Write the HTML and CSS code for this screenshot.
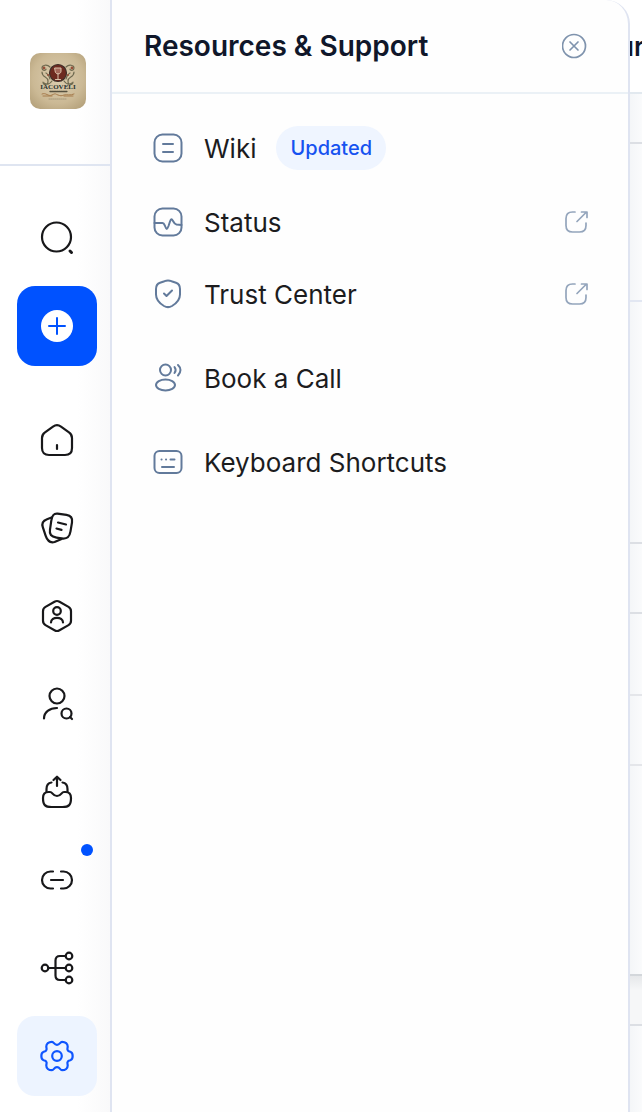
FILE: index.html
```html
<!DOCTYPE html>
<html lang="en">

<head>
    <meta charset="UTF-8">
    <meta name="viewport" content="width=device-width, initial-scale=1.0">
    <title>Resources &amp; Support</title>
    <link rel="stylesheet" href="styles.css">
</head>

<body>
    <div class="app">
        <aside class="sidebar">
            <div class="brand">
                <a href="#" class="brand-link" aria-label="Iacoveli">
                    <svg class="brand-logo" viewBox="0 0 56 56">
                        <defs>
                            <radialGradient id="paper" cx="50%" cy="45%" r="75%">
                                <stop offset="0" stop-color="#dccdb0" />
                                <stop offset="0.6" stop-color="#cbb995" />
                                <stop offset="1" stop-color="#ad9972" />
                            </radialGradient>
                        </defs>
                        <rect width="56" height="56" fill="url(#paper)" />
                        <g fill="none" stroke="#6f6a50" stroke-width="1.2">
                            <path d="M20 14c-3-3-8-2-8 1s4 3 4 1M12 19c0 6 6 4 6 9s-5 4-5 1M16 20c2 1 3 3 4 6M14 30c3 2 6 1 8-2" />
                            <path d="M36 14c3-3 8-2 8 1s-4 3-4 1M44 19c0 6-6 4-6 9s5 4 5 1M40 20c-2 1-3 3-4 6M42 30c-3 2-6 1-8-2" />
                        </g>
                        <g fill="#98503a">
                            <circle cx="14" cy="15" r="1.4" />
                            <circle cx="42" cy="15" r="1.4" />
                            <circle cx="18" cy="22" r="1" />
                            <circle cx="38" cy="22" r="1" />
                        </g>
                        <circle cx="28" cy="20" r="8.5" fill="#6d2a20" stroke="#3e302a" stroke-width="1.2" />
                        <path d="M25 15h6v3c0 4-6 4-6 0zM28 21v5M25.500 26.500h5" fill="#a4685a" stroke="#dcc4ac" stroke-width="1" />
                        <text x="28" y="36" class="brand-name">IACOVELI</text>
                        <path d="M20 38.500h17" stroke="#55503f" stroke-width="1.400" stroke-dasharray="1.500 0.700" />
                        <path d="M12 41c4-2 6 3 10 1s3-1 6 0 3 1 6 0 6 1 10-1M13 43h9M34 43h9" fill="none" stroke="#a67c4d" stroke-width="1" />
                        <path d="M19 46h18" stroke="#9d9175" stroke-width="0.800" stroke-dasharray="1 1" />
                    </svg>
                </a>
            </div>

            <nav class="nav" aria-label="Main">
                <button type="button" class="nav-btn" aria-label="Search">
                    <svg class="nav-icon" viewBox="0 0 36 36">
                        <circle cx="17.500" cy="17" r="14.500" />
                        <path d="M31 31l1.500 1.500" stroke-width="3" />
                    </svg>
                </button>
                <button type="button" class="nav-btn nav-btn-add" aria-label="Create">
                    <svg class="nav-icon" viewBox="0 0 36 36">
                        <circle cx="18" cy="18" r="16" fill="#fff" stroke="none" />
                        <path d="M18 10v16M10 18h16" stroke-width="2" />
                    </svg>
                </button>

                <a href="#" class="nav-btn nav-btn-first" aria-label="Home">
                    <svg class="nav-icon" viewBox="0 0 36 36">
                        <path d="M3 16c0-2.800 1-4.300 3-5.700l8-5.700c3-2.100 5-2.100 8 0l8 5.700c2 1.400 3 2.900 3 5.700v10c0 4.500-2.500 7-7 7H10c-4.500 0-7-2.500-7-7z" />
                        <path d="M18 23v4" />
                    </svg>
                </a>
                <a href="#" class="nav-btn" aria-label="Content">
                    <svg class="nav-icon" viewBox="0 0 36 36">
                        <path d="M18.500 3.600l9 1.300c4.400.7 6.200 3.100 5.500 7.500l-1.500 9c-1 6-3.500 7.800-9 7l-5-.8c-5.500-.9-7.300-3.200-6.500-8l1.300-9c.8-5.400 2.200-7.400 6.200-7z" />
                        <path d="M12.500 7.500L8 9.200c-4 1.500-5.500 4-4.200 8l2.800 8.500c1.800 5.500 4.400 7.500 9 6.300l7-3" />
                        <path d="M19 12.500l8 2M17.500 18.500l5 1.400" />
                    </svg>
                </a>
                <a href="#" class="nav-btn" aria-label="Profile">
                    <svg class="nav-icon" viewBox="0 0 36 36">
                        <path d="M15.500 3.700c1.800-1 3.200-1 5 0l9 5.200c1.800 1 2.500 2.200 2.500 4.300v9.600c0 2.100-.7 3.300-2.500 4.300l-9 5.200c-1.800 1-3.200 1-5 0l-9-5.200C4.700 26.100 4 24.900 4 22.800v-9.600c0-2.100.7-3.300 2.500-4.300z" />
                        <circle cx="18" cy="13" r="3.800" />
                        <path d="M12 24.500c0-6.300 12-6.300 12 0" />
                    </svg>
                </a>
                <a href="#" class="nav-btn" aria-label="Find people">
                    <svg class="nav-icon" viewBox="0 0 36 36">
                        <circle cx="18" cy="10" r="7.500" />
                        <path d="M5 32.500C5 26 10.500 22 18 22" />
                        <circle cx="27.500" cy="27.500" r="5" />
                        <path d="M31 31l2 2" />
                    </svg>
                </a>
                <a href="#" class="nav-btn" aria-label="Outbox">
                    <svg class="nav-icon" viewBox="0 0 36 36">
                        <path d="M11 18c2.800 0 2.500 4 7 4s4.200-4 7-4h1.500c4 0 5.500 2 5.500 6 0 7-2 9-8.500 9h-11C6 33 4 31 4 24c0-4 1.500-6 5.500-6z" />
                        <path d="M7.500 17.500V15c0-4 1.500-6 5-6.500M28.500 17.500V15c0-4-1.500-6-5-6.500M18 12V3M14.500 6L18 2.700 21.500 6" />
                    </svg>
                </a>
                <a href="#" class="nav-btn" aria-label="Links, new">
                    <svg class="nav-icon" viewBox="0 0 36 36">
                        <path d="M14 9.500h-2.500a8.500 8.500 0 0 0 0 17H14M22 9.500h2.500a8.500 8.500 0 0 1 0 17H22M12 18h12" />
                    </svg>
                    <span class="nav-dot"></span>
                </a>
                <a href="#" class="nav-btn" aria-label="Flows">
                    <svg class="nav-icon" viewBox="0 0 36 36">
                        <circle cx="6" cy="18" r="3.300" />
                        <circle cx="30" cy="6" r="3.300" />
                        <circle cx="30" cy="18" r="3.300" />
                        <circle cx="30" cy="30" r="3.300" />
                        <path d="M9.500 18h17M26.500 6H21c-3 0-4.500 1.500-4.500 4.500v15c0 3 1.500 4.500 4.500 4.500h5.500" />
                    </svg>
                </a>
                <a href="#" class="nav-btn nav-btn-active" aria-label="Settings">
                    <svg class="nav-icon" viewBox="0 0 36 36">
                        <circle cx="18" cy="18" r="4.800" />
                        <path d="M13 3.800c2 0 2 3 5 3s3-3 5-3c3.500 0 5.700 2 5.700 4.800 0 2-.9 2.400.1 3.700.9 1.300 1.600.9 2.900 1.600 2.600 1.200 2.600 7 0 8.200-1.300.7-2 .3-2.900 1.600-1 1.300-.1 1.700-.1 3.700 0 2.800-2.200 4.800-5.700 4.800-2 0-2-3-5-3s-3 3-5 3c-3.500 0-5.700-2-5.700-4.800 0-2 .9-2.400-.1-3.700-.9-1.300-1.600-.9-2.900-1.600-2.600-1.200-2.600-7 0-8.200 1.300-.7 2-.3 2.900-1.600 1-1.300.1-1.700.1-3.700 0-2.800 2.200-4.800 5.700-4.800z" />
                    </svg>
                </a>
            </nav>
        </aside>

        <section class="panel">
            <header class="panel-header">
                <h2 class="panel-title">Resources &amp; Support</h2>
                <button type="button" class="close" aria-label="Close">
                    <svg class="small-icon" viewBox="0 0 26 26">
                        <circle cx="12" cy="13" r="11.500" />
                        <path d="M8 9l8 8M16 9l-8 8" />
                    </svg>
                </button>
            </header>

            <ul class="menu">
                <li class="menu-first">
                    <a href="#" class="menu-item">
                        <svg class="menu-icon" viewBox="0 0 32 32">
                            <rect x="2.500" y="2.500" width="27" height="27" rx="8" />
                            <path d="M11 12h10M11 20h10" />
                        </svg>
                        <span>Wiki</span>
                        <span class="badge">Updated</span>
                    </a>
                </li>
                <li>
                    <a href="#" class="menu-item">
                        <svg class="menu-icon" viewBox="0 0 32 32">
                            <rect x="2.500" y="2.500" width="27" height="27" rx="8" />
                            <path d="M2.500 17h8c1.500 0 1.700 1 2.500 3 1.500 4 2 4 3.500 0l1.500-4.500c1-3 1.700-3 3-.5 1 2 1.500 3 3.500 3.500l5 .5" />
                        </svg>
                        <span>Status</span>
                        <svg class="small-icon external" viewBox="0 0 26 26">
                            <path d="M12 3H9.500C5 3 3 5 3 9.500v7c0 4.500 2 6.500 6.500 6.500h7c4.500 0 6.500-2 6.500-6.500V14M14 12.500L23 3.500M18.500 3H24v5.500" />
                        </svg>
                    </a>
                </li>
                <li>
                    <a href="#" class="menu-item">
                        <svg class="menu-icon" viewBox="0 0 32 32">
                            <path d="M12.500 3.200c2.700-1.200 4.300-1.200 7 0l4.500 1.500c3 1 4 2.500 4 6.300v5.500c0 5.500-3 8.500-8 11.500-3.200 1.800-4.800 1.800-8 0-5-3-8-6-8-11.500V11c0-3.800 1-5.300 4-6.300z" />
                            <path d="M12 15.500l2.500 2.500 5.500-5.500" />
                        </svg>
                        <span>Trust Center</span>
                        <svg class="small-icon external" viewBox="0 0 26 26">
                            <path d="M12 3H9.500C5 3 3 5 3 9.500v7c0 4.500 2 6.500 6.500 6.500h7c4.500 0 6.500-2 6.500-6.500V14M14 12.500L23 3.500M18.500 3H24v5.500" />
                        </svg>
                    </a>
                </li>
                <li class="menu-group">
                    <a href="#" class="menu-item">
                        <svg class="menu-icon" viewBox="0 0 32 32">
                            <circle cx="13.500" cy="8" r="5.500" />
                            <ellipse cx="13.500" cy="23" rx="9.500" ry="5.500" />
                            <path d="M22.500 5c1.500 2 1.500 4 0 6M26 3c3.300 3 3.300 7 0 10.500" />
                        </svg>
                        <span>Book a Call</span>
                    </a>
                </li>
                <li class="menu-group">
                    <a href="#" class="menu-item">
                        <svg class="menu-icon" viewBox="0 0 32 32">
                            <rect x="2.500" y="5" width="27" height="22" rx="5" />
                            <path d="M10 21h12M9.500 13.500h.1M14 13.500h.1M18.500 13.500h4" />
                        </svg>
                        <span>Keyboard Shortcuts</span>
                    </a>
                </li>
            </ul>
        </section>

        <!-- edge of the page that stays visible beside the panel -->
        <main class="page">
            <div class="page-row row-head"><span class="page-title">ur</span></div>
            <div class="page-row row-tabs"></div>
            <div class="page-row row-intro"></div>
            <div class="page-row row-chart"></div>
            <div class="page-row row-short"></div>
            <div class="page-row row-line"></div>
            <div class="page-row row-short row-soft"></div>
            <div class="page-row row-list"></div>
            <div class="page-row row-foot"></div>
        </main>
    </div>
</body>

</html>
```
FILE: styles.css
```css
* {
    box-sizing: border-box;
}

body {
    margin: 0;
    background: #fff;
    color: #1c1c1e;
    font-family: Inter, "Liberation Sans", sans-serif;
    overflow-x: hidden;
}

a {
    color: inherit;
    text-decoration: none;
}

button {
    border: none;
    padding: 0;
    background: none;
    cursor: pointer;
}

svg {
    display: block;
    flex: none;
    fill: none;
    stroke: currentColor;
    stroke-width: 2;
    stroke-linecap: round;
    stroke-linejoin: round;
}

.app {
    display: flex;
    min-height: 100vh;
}

/* sidebar */
.sidebar {
    flex: none;
    width: 110px;
    background: linear-gradient(to right, #fff 70%, #f9f9fa);
}

.brand {
    padding: 53px 24px 55px 30px;
    border-bottom: 2px solid #dfe5f1;
}

.brand-link {
    display: block;
    width: 56px;
    border-radius: 10px;
    overflow: hidden;
}

.brand-logo {
    width: 56px;
    height: 56px;
    stroke: none;
}

.brand-name {
    font-family: "Liberation Serif", serif;
    font-size: 7px;
    font-weight: bold;
    text-anchor: middle;
    fill: #27312f;
}

.nav {
    display: flex;
    flex-direction: column;
    gap: 8px;
    padding: 32px 13px 16px 17px;
}

.nav-btn {
    position: relative;
    display: flex;
    align-items: center;
    justify-content: center;
    height: 80px;
    border-radius: 18px;
    color: #18181a;
}

.nav-btn-first {
    margin-top: 26px;
}

.nav-btn-add {
    background: #0052ff;
    color: #0052ff;
}

.nav-btn-active {
    background: #edf4ff;
    color: #0f55ff;
}

.nav-icon {
    width: 36px;
    height: 36px;
    stroke-width: 2.2;
}

.nav-dot {
    position: absolute;
    top: 4px;
    right: 4px;
    width: 12px;
    height: 12px;
    border-radius: 50%;
    background: #0052ff;
}

/* panel */
.panel {
    flex: 1;
    min-width: 0;
    background: #fefefe;
    border-left: 2px solid #dfe4f1;
    border-right: 2px solid #dfe4f1;
    border-top-right-radius: 24px;
}

.panel-header {
    display: flex;
    align-items: center;
    justify-content: space-between;
    height: 94px;
    padding: 0 40px 0 32px;
    border-bottom: 2px solid #ebf1f6;
}

.panel-title {
    margin: 0;
    font-size: 28px;
    font-weight: 600;
    color: #10172a;
}

.close {
    color: #7f93ad;
}

.small-icon {
    width: 26px;
    height: 26px;
    stroke-width: 1.7;
}

.menu {
    list-style: none;
    margin: 0;
    padding: 18px 39px 18px 40px;
}

.menu-first {
    margin-bottom: 2px;
}

.menu-group {
    margin-top: 12px;
}

.menu-item {
    display: flex;
    align-items: center;
    gap: 20px;
    height: 72px;
    font-size: 26px;
}

.menu-icon {
    width: 32px;
    height: 32px;
    color: #627a9b;
}

.badge {
    padding: 0 14px;
    border-radius: 22px;
    background: #eff5ff;
    color: #1652f0;
    font-size: 20px;
    font-weight: 500;
    line-height: 44px;
}

.external {
    margin-left: auto;
    color: #94a5bc;
}

/* page behind the panel */
.page {
    flex: none;
    width: 12px;
    overflow: hidden;
    background: linear-gradient(to right, #f4f6f8, #fafbfc);
}

.page-row {
    border-bottom: 2px solid #dcdfe4;
}

.row-head {
    display: flex;
    align-items: center;
    height: 94px;
    background: #fff;
    border-color: #e2e9ef;
}

.page-title {
    margin-left: -12px;
    font-size: 26px;
    font-weight: 600;
    color: #10172a;
}

.row-tabs {
    height: 50px;
}

.row-intro {
    height: 158px;
    border-color: #e2e7f2;
}

.row-chart {
    height: 242px;
}

.row-short {
    height: 70px;
}

.row-line {
    height: 82px;
    border-color: #e4e6ea;
}

.row-soft {
    border-color: #e4e6ea;
}

.row-list {
    height: 210px;
    border-color: #d3d7db;
}

.row-foot {
    height: 50px;
    background: linear-gradient(#e6e8ea, #f6f7f8 30%);
}
```
